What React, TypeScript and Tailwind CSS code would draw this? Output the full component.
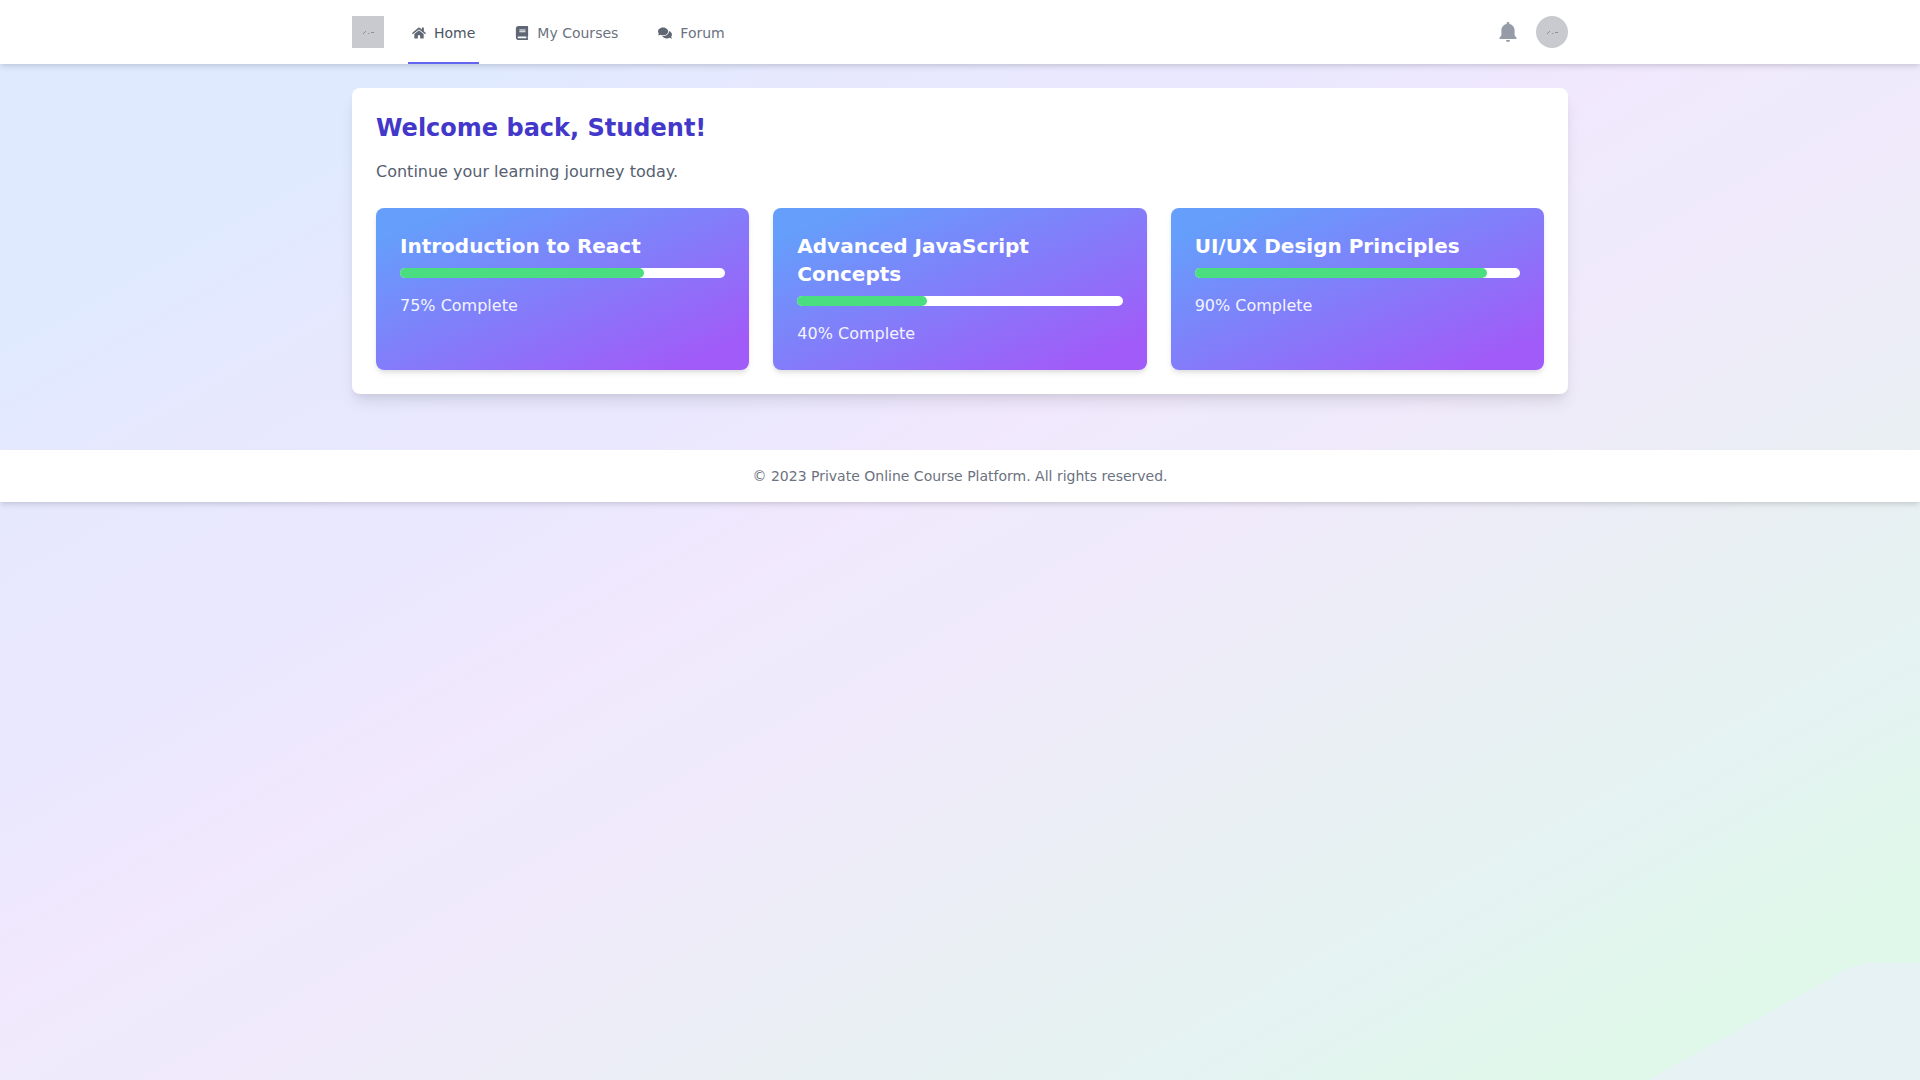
import { FaBook, FaComments, FaHome } from "react-icons/fa";
import type { IconType } from "react-icons";

interface NavItem {
  label: string;
  icon: IconType;
  active?: boolean;
}

interface Course {
  id: number;
  title: string;
  progress: number;
}

const NAV_ITEMS: NavItem[] = [
  { label: "Home", icon: FaHome, active: true },
  { label: "My Courses", icon: FaBook },
  { label: "Forum", icon: FaComments },
];

const COURSES: Course[] = [
  { id: 1, title: "Introduction to React", progress: 75 },
  { id: 2, title: "Advanced JavaScript Concepts", progress: 40 },
  { id: 3, title: "UI/UX Design Principles", progress: 90 },
];

function Placeholder({ label, className = "" }: { label: string; className?: string }) {
  return (
    <svg viewBox="0 0 32 32" role="img" aria-label={label} className={`size-8 bg-[#c9cacf] ${className}`}>
      <path d="M11 18l3-3M16.2 17.5h1.2M19 16.5h3" stroke="#888a91" strokeWidth="0.9" fill="none" />
    </svg>
  );
}

function BellIcon() {
  return (
    <svg viewBox="0 0 24 24" fill="currentColor" aria-hidden="true" className="size-6">
      <path d="M12 2c-.8 0-1.4.6-1.4 1.4v.7C7.600 4.700 5.400 7.200 5.400 10.300v4.200c0 1-.5 1.700-1.200 2.400-.5.4-.9.8-.9 1.300 0 .5.4.8.9.8h15.600c.5 0 .9-.3.9-.8 0-.5-.4-.9-.9-1.300-.7-.7-1.200-1.400-1.200-2.400v-4.200c0-3.100-2.200-5.600-5.200-6.200v-.7C13.400 2.600 12.800 2 12 2z" />
      <path d="M10 20h4a2 2 0 0 1-4 0z" />
    </svg>
  );
}

function Header() {
  return (
    <header className="bg-white shadow-[0_4px_6px_-1px_rgb(0_0_0/0.1),0_2px_4px_-1px_rgb(0_0_0/0.06)]">
      <div className="mx-auto flex h-16 max-w-7xl justify-between px-8">
        <div className="flex gap-6">
          <a href="#" className="flex items-center">
            <Placeholder label="Logo" />
          </a>
          <nav className="flex gap-8">
            {NAV_ITEMS.map(({ label, icon: Icon, active }) => (
              <a
                key={label}
                href="#"
                className={`flex items-center border-b-2 px-1 pt-1 text-sm font-medium ${
                  active ? "border-[#6366f1] text-[#4b5563]" : "border-transparent text-[#6b7280]"
                }`}
              >
                <Icon className="mr-2 text-[#5f6775]" />
                {label}
              </a>
            ))}
          </nav>
        </div>
        <div className="flex items-center gap-3">
          <button type="button" aria-label="Notifications" className="rounded-full p-1 text-[#959ca8]">
            <BellIcon />
          </button>
          <Placeholder label="Profile" className="rounded-full" />
        </div>
      </div>
    </header>
  );
}

function CourseCard({ title, progress }: Course) {
  return (
    <article className="rounded-lg bg-linear-to-br/srgb from-[#659efb] from-10% to-[#a15bf8] to-90% p-6 text-white shadow-[0_4px_6px_-1px_rgb(0_0_0/0.1),0_2px_4px_-1px_rgb(0_0_0/0.06)]">
      <h2 className="mb-2 text-xl font-semibold">{title}</h2>
      <div className="mb-4 h-2.5 rounded-full bg-white">
        <div className="h-2.5 rounded-full bg-[#4ade80]" style={{ width: `${progress}%` }} />
      </div>
      <p className="text-[#f3f4ff]">{progress}% Complete</p>
    </article>
  );
}

export default function App() {
  return (
    <div className="relative min-h-screen overflow-hidden bg-[linear-gradient(to_bottom_right,#e0eaff_16%,#e6e8fe_24%,#ebe8fe_38%,#f1e8fd_46%,#eeeafb_51%,#f0eafb_56%,#e9eff3_70%,#e4f4f1_82%,#dff8e9_91%)] font-['DejaVu_Sans',sans-serif]">
      {/* slanted corner accent behind the page */}
      <div className="absolute right-0 bottom-0 h-[117px] w-[272px] bg-[#e6f2f3] [clip-path:polygon(0_100%,74%_4%,80%_0,100%_0,100%_100%)]" />
      <div className="relative">
        <Header />
        <main className="mx-auto max-w-7xl px-8 py-6">
          <section className="rounded-lg bg-white p-6 shadow-[0_10px_15px_-3px_rgb(0_0_0/0.1),0_4px_6px_-2px_rgb(0_0_0/0.05)]">
            <h1 className="mb-4 text-2xl font-bold text-[#4338ca]">Welcome back, Student!</h1>
            <p className="mb-6 text-[#566070]">Continue your learning journey today.</p>
            <div className="grid grid-cols-1 gap-6 md:grid-cols-2 lg:grid-cols-3">
              {COURSES.map((course) => (
                <CourseCard key={course.id} {...course} />
              ))}
            </div>
          </section>
        </main>
        <footer className="mt-8 bg-white px-8 py-4 text-center text-sm text-[#6b7280] shadow-[0_4px_6px_-1px_rgb(0_0_0/0.1),0_2px_4px_-1px_rgb(0_0_0/0.06)]">
          © 2023 Private Online Course Platform. All rights reserved.
        </footer>
      </div>
    </div>
  );
}
